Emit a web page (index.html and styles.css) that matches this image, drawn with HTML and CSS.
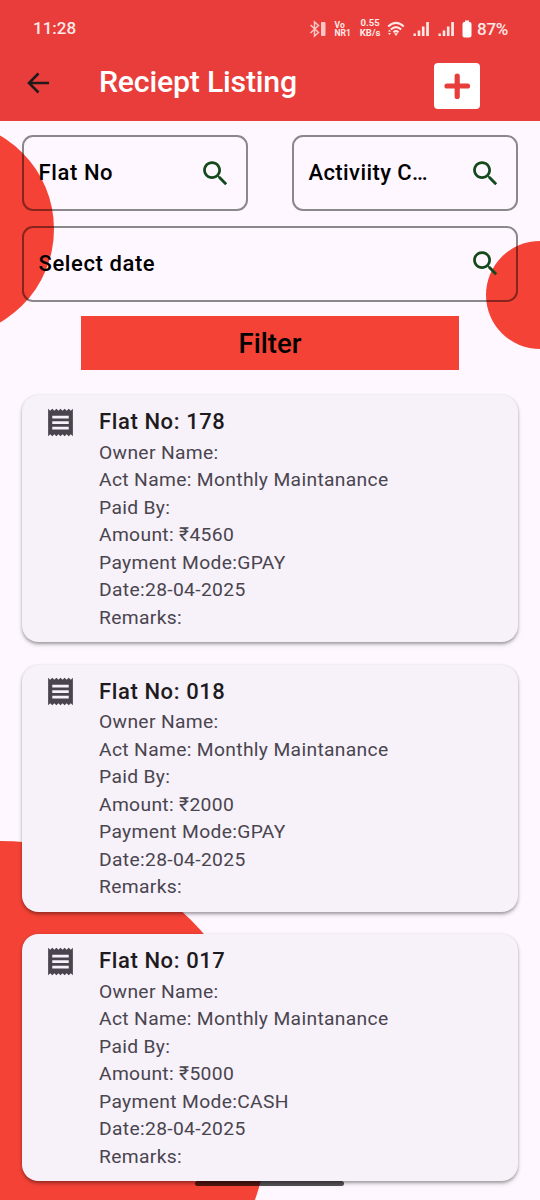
FILE: index.html
```
<!DOCTYPE html>
<html lang="en">
<head>
<meta charset="utf-8">
<title>Reciept Listing</title>
<link rel="stylesheet" href="styles.css">
</head>
<body>
<svg class="defs" width="0" height="0">
  <symbol id="search" viewBox="0 0 24 24"><path d="M15.5 14h-.79l-.28-.27C15.41 12.59 16 11.11 16 9.5 16 5.91 13.09 3 9.5 3S3 5.91 3 9.5 5.91 16 9.5 16c1.61 0 3.09-.59 4.23-1.57l.27.28v.79l5 4.99L20.49 19l-4.99-5zm-6 0C7.01 14 5 11.99 5 9.5S7.01 5 9.5 5 14 7.01 14 9.5 11.99 14 9.5 14z"/></symbol>
  <symbol id="receipt" viewBox="0 0 24 24"><path d="M18 17H6v-2h12v2zm0-4H6v-2h12v2zm0-4H6V7h12v2zM3 22l1.5-1.5L6 22l1.5-1.5L9 22l1.5-1.5L12 22l1.5-1.5L15 22l1.5-1.5L18 22l1.5-1.5L21 22V2l-1.5 1.5L18 2l-1.5 1.5L15 2l-1.5 1.5L12 2l-1.5 1.5L9 2 7.5 3.5 6 2 4.5 3.5 3 2v20z"/></symbol>
  <symbol id="signal" viewBox="0 0 17 16"><path d="M.5 12.500h2.400V15H.5zM4.700 9.500h2.600V15H4.700zM8.900 5.500h2.600V15H8.900zM13.200 1h2.700v14h-2.700z"/></symbol>
</svg>
<div class="screen">
  <div class="blob blob-left"></div>
  <div class="blob blob-right"></div>
  <div class="blob blob-bottom"></div>

  <header class="top">
    <div class="status">
      <span class="clock">11:28</span>
      <div class="indicators">
        <svg class="bluetooth" width="18" height="18" viewBox="0 0 18 18"><path d="M1.500 5l8 7.500-4 3.500V2l4 3.500-8 7.500" fill="none" stroke="currentColor" stroke-width="1.500"/><rect x="12" y="2" width="4.500" height="14" rx="1" fill="currentColor"/></svg>
        <span class="volte"><span>Vo</span><span>NR1</span></span>
        <span class="speed"><span>0.55</span><span>KB/s</span></span>
        <svg class="wifi" width="18" height="16" viewBox="0 0 18 16"><path d="M1.200 5.500Q9-1.800 16.800 5.500M3.800 8.500Q9 3.800 14.200 8.500M6.400 11.300Q9 9 11.600 11.300" fill="none" stroke="currentColor" stroke-width="2"/><path d="M7 12.300h4L9 15zM1 10.500h3L2.500 8.500zM1 12h3l-1.500 2z" fill="currentColor"/></svg>
        <svg class="bars" width="17" height="16"><use href="#signal"/></svg>
        <svg class="bars" width="17" height="16"><use href="#signal"/></svg>
        <svg class="battery" width="10" height="18" viewBox="0 0 10 18"><path d="M3 .5h4v1.500h.5a2 2 0 0 1 2 2v11.500a2 2 0 0 1-2 2h-5a2 2 0 0 1-2-2V4a2 2 0 0 1 2-2H3z" fill="currentColor"/></svg>
        <span class="percent">87%</span>
      </div>
    </div>
    <div class="appbar">
      <svg class="back" width="24" height="24" viewBox="0 0 24 24"><path d="M12.500 2.500L3 12l9.500 9.500M3.200 12H23" fill="none" stroke="#211a1b" stroke-width="2.600"/></svg>
      <h1>Reciept Listing</h1>
      <button class="add" aria-label="Add"><svg width="46" height="46" viewBox="0 0 46 46"><path d="M13 23h20.500M23.200 13v20.500" stroke="#e73d3b" stroke-width="5.200" stroke-linecap="round"/></svg></button>
    </div>
  </header>

  <main>
    <div class="filters">
      <div class="field"><span>Flat No</span><svg><use href="#search"/></svg></div>
      <div class="field"><span class="clipped">Activiity C…</span><svg><use href="#search"/></svg></div>
      <div class="field wide"><span>Select date</span><svg><use href="#search"/></svg></div>
    </div>
    <button class="filter">Filter</button>

    <div class="cards">
      <article class="card">
        <svg><use href="#receipt"/></svg>
        <div>
          <h2>Flat No: 178</h2>
          <p>Owner Name:</p><p>Act Name: Monthly Maintanance</p><p>Paid By:</p><p>Amount: ₹4560</p><p>Payment Mode:GPAY</p><p>Date:28-04-2025</p><p>Remarks:</p>
        </div>
      </article>
      <article class="card">
        <svg><use href="#receipt"/></svg>
        <div>
          <h2>Flat No: 018</h2>
          <p>Owner Name:</p><p>Act Name: Monthly Maintanance</p><p>Paid By:</p><p>Amount: ₹2000</p><p>Payment Mode:GPAY</p><p>Date:28-04-2025</p><p>Remarks:</p>
        </div>
      </article>
      <article class="card">
        <svg><use href="#receipt"/></svg>
        <div>
          <h2>Flat No: 017</h2>
          <p>Owner Name:</p><p>Act Name: Monthly Maintanance</p><p>Paid By:</p><p>Amount: ₹5000</p><p>Payment Mode:CASH</p><p>Date:28-04-2025</p><p>Remarks:</p>
        </div>
      </article>
    </div>
  </main>
  <div class="home-bar"></div>
</div>
</body>
</html>
```
FILE: styles.css
```
* { box-sizing: border-box; }
body { margin: 0; font-family: Roboto, sans-serif; }
h1, h2, p { margin: 0; font-weight: 400; }
button { border: 0; padding: 0; font: inherit; }
.defs { position: absolute; }
.screen { position: relative; width: 540px; height: 1200px; overflow: hidden; background: #fef7ff; }

.blob { position: absolute; border-radius: 50%; background: #f44336; }
.blob-left { left: -162px; top: 121px; width: 216px; height: 216px; }
.blob-right { left: 486px; top: 241px; width: 108px; height: 108px; }
.blob-bottom { left: -270px; top: 841px; width: 540px; height: 540px; }

.top { position: relative; height: 121px; background: #e83d3b; color: #fff; }
.status { display: flex; justify-content: space-between; align-items: center; height: 44px; padding: 13px 32px 0 33px; }
.clock { margin-top: -1px; font-size: 17px; font-weight: 500; color: #ffe9e7; }
.indicators { display: flex; align-items: center; color: #ffe9e7; }
.bluetooth { opacity: 0.8; }
.volte, .speed { display: flex; flex-direction: column; font-weight: 700; }
.volte { margin-left: 8px; width: 17px; font-size: 8.5px; line-height: 8px; }
.speed { margin-left: 8px; width: 21px; margin-top: -1px; font-size: 9.5px; line-height: 10px; text-align: center; white-space: nowrap; }
.wifi { margin-left: 6.500px; }
.bars { margin-left: 8px; fill: currentColor; }
.battery { margin-left: 7px; color: #fff; }
.percent { margin-left: 5px; font-size: 17px; font-weight: 500; letter-spacing: -0.3px; }

.appbar { display: flex; align-items: center; height: 77px; padding: 0 60px 0 26px; }
.back { margin-top: 1px; }
.appbar h1 { margin: -1px 0 0 49px; font-size: 30.25px; font-weight: 500; line-height: 38px; letter-spacing: -0.2px; white-space: nowrap; }
.add { display: block; width: 46.500px; height: 46px; margin: 6px 0 0 auto; border-radius: 4px; background: #fff; }
.add svg { display: block; }

main { position: relative; }
.filters { display: grid; grid-template-columns: 226px 226px; gap: 14.500px 44px; padding: 14px 22px 0; }
.field { display: flex; justify-content: space-between; align-items: center; height: 76.250px; padding: 0 14.500px; border: 2.750px solid rgba(0, 0, 0, 0.45); border-radius: 11px; font-size: 22px; font-weight: 500; color: #000; }
.field span { margin-top: -1px; letter-spacing: 0.6px; }
.field .clipped { letter-spacing: 0.4px; }
.field svg { width: 33px; height: 33px; fill: #14491c; }
.wide { grid-column: 1 / -1; }
.filter { display: block; width: 378px; height: 54px; margin: 14px auto 0; background: #f44336; color: #000; font-size: 27.500px; font-weight: 500; letter-spacing: 0; }

.cards { display: flex; flex-direction: column; gap: 22.500px; padding: 25px 22px 0; }
.card { display: flex; height: 247px; padding: 10px 22px 0; gap: 22px; border-radius: 16.500px; background: #f7f1f9; box-shadow: 0 1.500px 3px rgba(0, 0, 0, 0.28), 0 3px 5px rgba(0, 0, 0, 0.12); }
.card svg { flex: none; width: 33px; height: 33px; margin-top: 0.500px; fill: #49454f; }
.card h2 { margin-bottom: 0.600px; font-size: 22px; font-weight: 500; line-height: 33px; letter-spacing: 0.6px; color: #1d1b20; }
.card p { font-size: 19.250px; line-height: 27.500px; letter-spacing: 0.34px; color: #49454f; }

.home-bar { position: absolute; left: 195px; top: 1180.500px; width: 149px; height: 5.500px; border-radius: 3px; background: rgba(0, 0, 0, 0.67); }
```
